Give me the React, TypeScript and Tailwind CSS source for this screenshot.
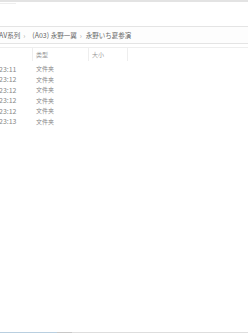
const rows = ["23:11", "23:12", "23:12", "23:12", "23:12", "23:13"];

export default function App() {
  return (
    <div
      className="relative flex h-[333px] w-[248px] flex-col overflow-hidden bg-white text-[#6d6d6d]"
      style={{ fontFamily: '"Noto Sans CJK SC", "Liberation Sans", sans-serif' }}
    >
      <div className="h-[2px] bg-[#e3e3e3]" />
      <div className="mt-px h-px w-4 bg-[#eeeeee]" />

      {/* breadcrumb bar */}
      <div className="mt-[22px] flex h-[18px] items-center border-y border-[#e4e4e4] bg-[#fdfdfd] pt-px text-[6.5px] leading-none text-[#666]">
        <span className="-ml-px">
          <span className="text-[7px]">AV</span>系列
        </span>
        <span className="ml-[3px] -mt-px text-[7px] text-[#aaa]">›</span>
        <span className="ml-[7px]">
          <span className="text-[7px]">(A03) </span>永野一翼
        </span>
        <span className="ml-[3px] -mt-px text-[7px] text-[#aaa]">›</span>
        <span className="ml-[4px]">永野いち夏参演</span>
      </div>

      {/* column header */}
      <div className="mt-[3px] flex h-[14px] items-center border-t border-[#eeeeee] text-[6px] leading-none text-[#999]">
        <div className="h-full w-[33px] border-r border-[#eeeeee]" />
        <div className="flex h-full w-[56px] items-center border-r border-[#eeeeee] pl-[3px]">类型</div>
        <div className="flex h-full w-[39px] items-center border-r border-[#eeeeee] pl-[3px]">大小</div>
      </div>

      <div className="mt-[3px] flex flex-col leading-none text-[#888]">
        {rows.map((time, i) => (
          <div key={i} className="flex h-[10.5px] items-center">
            <span className="-ml-px w-[37px] text-[7px]">{time}</span>
            <span className="text-[6px]">文件夹</span>
          </div>
        ))}
      </div>

      <div className="absolute bottom-0 left-0 flex h-px w-full">
        <div className="w-[57px] bg-[#b9cfe0]" />
        <div className="w-[15px] bg-[#c8c8c8]" />
        <div className="flex-1 bg-[#dedede]" />
      </div>
    </div>
  );
}
